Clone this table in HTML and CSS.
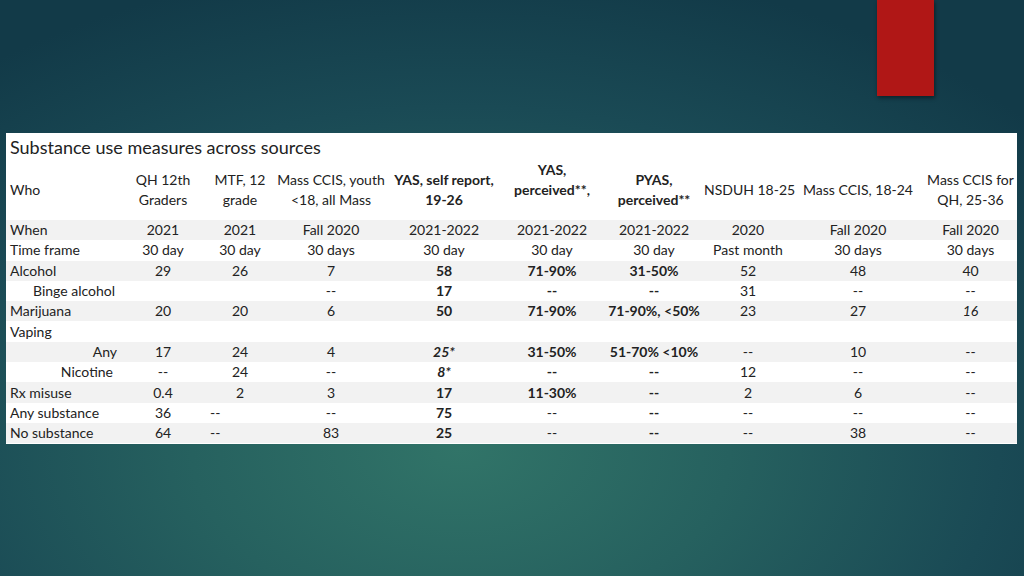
FILE: index.html
```html
<!DOCTYPE html>
<html>
<head>
<meta charset="utf-8">
<link rel="stylesheet" href="styles.css">
</head>
<body>
<div class="slide">
  <div class="accent"></div>
  <div class="panel">
    <div class="title">Substance use measures across sources</div>
    <table class="data">
      <colgroup>
        <col class="c0"><col class="c1"><col class="c2"><col class="c3"><col class="c4"><col class="c5"><col class="c6"><col class="c7"><col class="c8"><col class="c9">
      </colgroup>
      <thead>
        <tr class="head">
          <th class="label">Who</th>
          <th>QH 12th<br>Graders</th>
          <th>MTF, 12<br>grade</th>
          <th>Mass CCIS, youth<br>&lt;18, all Mass</th>
          <th class="b">YAS, self report,<br>19-26</th>
          <th class="b">YAS,<br>perceived**,<br>&nbsp;</th>
          <th class="b">PYAS,<br>perceived**</th>
          <th>NSDUH 18-25</th>
          <th>Mass CCIS, 18-24</th>
          <th>Mass CCIS for<br>QH, 25-36</th>
        </tr>
      </thead>
      <tbody>
        <tr class="alt"><td class="label">When</td><td>2021</td><td>2021</td><td>Fall 2020</td><td>2021-2022</td><td>2021-2022</td><td>2021-2022</td><td>2020</td><td>Fall 2020</td><td>Fall 2020</td></tr>
        <tr><td class="label">Time frame</td><td>30 day</td><td>30 day</td><td>30 days</td><td>30 day</td><td>30 day</td><td>30 day</td><td>Past month</td><td>30 days</td><td>30 days</td></tr>
        <tr class="alt"><td class="label">Alcohol</td><td>29</td><td>26</td><td>7</td><td class="b">58</td><td class="b">71-90%</td><td class="b">31-50%</td><td>52</td><td>48</td><td>40</td></tr>
        <tr><td class="label indent">Binge alcohol</td><td></td><td></td><td>--</td><td class="b">17</td><td class="b">--</td><td class="b">--</td><td>31</td><td>--</td><td>--</td></tr>
        <tr class="alt"><td class="label">Marijuana</td><td>20</td><td>20</td><td>6</td><td class="b">50</td><td class="b">71-90%</td><td class="b">71-90%, &lt;50%</td><td>23</td><td>27</td><td class="i">16</td></tr>
        <tr><td class="label">Vaping</td><td></td><td></td><td></td><td></td><td></td><td></td><td></td><td></td><td></td></tr>
        <tr class="alt"><td class="label right any">Any</td><td>17</td><td>24</td><td>4</td><td class="b i">25*</td><td class="b">31-50%</td><td class="b">51-70% &lt;10%</td><td>--</td><td>10</td><td>--</td></tr>
        <tr><td class="label right nic">Nicotine</td><td>--</td><td>24</td><td>--</td><td class="b i">8*</td><td class="b">--</td><td class="b">--</td><td>12</td><td>--</td><td>--</td></tr>
        <tr class="alt"><td class="label">Rx misuse</td><td>0.4</td><td>2</td><td>3</td><td class="b">17</td><td class="b">11-30%</td><td class="b">--</td><td>2</td><td>6</td><td>--</td></tr>
        <tr><td class="label">Any substance</td><td>36</td><td class="left">--</td><td>--</td><td class="b">75</td><td>--</td><td class="b">--</td><td>--</td><td>--</td><td>--</td></tr>
        <tr class="alt"><td class="label">No substance</td><td>64</td><td class="left">--</td><td>83</td><td class="b">25</td><td>--</td><td class="b">--</td><td>--</td><td>38</td><td>--</td></tr>
      </tbody>
    </table>
  </div>
</div>
</body>
</html>
```

FILE: styles.css
```css
html, body {
  margin: 0;
  padding: 0;
}
body {
  width: 1024px;
  height: 576px;
  overflow: hidden;
  font-family: Lato, "Open Sans", sans-serif;
  color: #222;
}
.slide {
  width: 1024px;
  height: 576px;
  display: flex;
  flex-direction: column;
  background: radial-gradient(ellipse 75% 85% at 45% 78%, #317468 0%, #26615f 35%, #1a4a55 70%, #123a48 100%);
}
.accent {
  margin-left: 877px;
  width: 57px;
  height: 96px;
  background: #b01716;
  box-shadow: 1px 2px 4px rgba(0,0,0,0.45);
}
.panel {
  margin: 37px 0 0 6px;
  width: 1011px;
  height: 311px;
  background: #fff;
  display: flex;
  flex-direction: column;
}
.title {
  height: 27px;
  flex: none;
  line-height: 28px;
  padding-left: 4px;
  font-size: 18px;
}
.data {
  border-collapse: collapse;
  table-layout: fixed;
  width: 1011px;
  font-size: 14px;
}
.c0 { width: 114px; }
.c1 { width: 86px; }
.c2 { width: 68px; }
.c3 { width: 114px; }
.c4 { width: 112px; }
.c5 { width: 104px; }
.c6 { width: 100px; }
.c7 { width: 88px; }
.c8 { width: 132px; }
.c9 { width: 93px; }
.data th, .data td {
  padding: 0;
  text-align: center;
  vertical-align: middle;
  white-space: nowrap;
  line-height: 20px;
  height: 20.3px;
  font-weight: normal;
}
.data .head th {
  height: 60px;
}
.data .b { font-weight: bold; }
.data .i { font-style: italic; }
.data .label {
  text-align: left;
  padding-left: 4px;
}
.data .indent { padding-left: 27px; }
.data .right { text-align: right; padding-left: 0; }
.data .any { padding-right: 3px; }
.data .nic { padding-right: 7px; }
.data .left { text-align: left; padding-left: 4px; }
.alt td { background: #f2f2f2; }
```
